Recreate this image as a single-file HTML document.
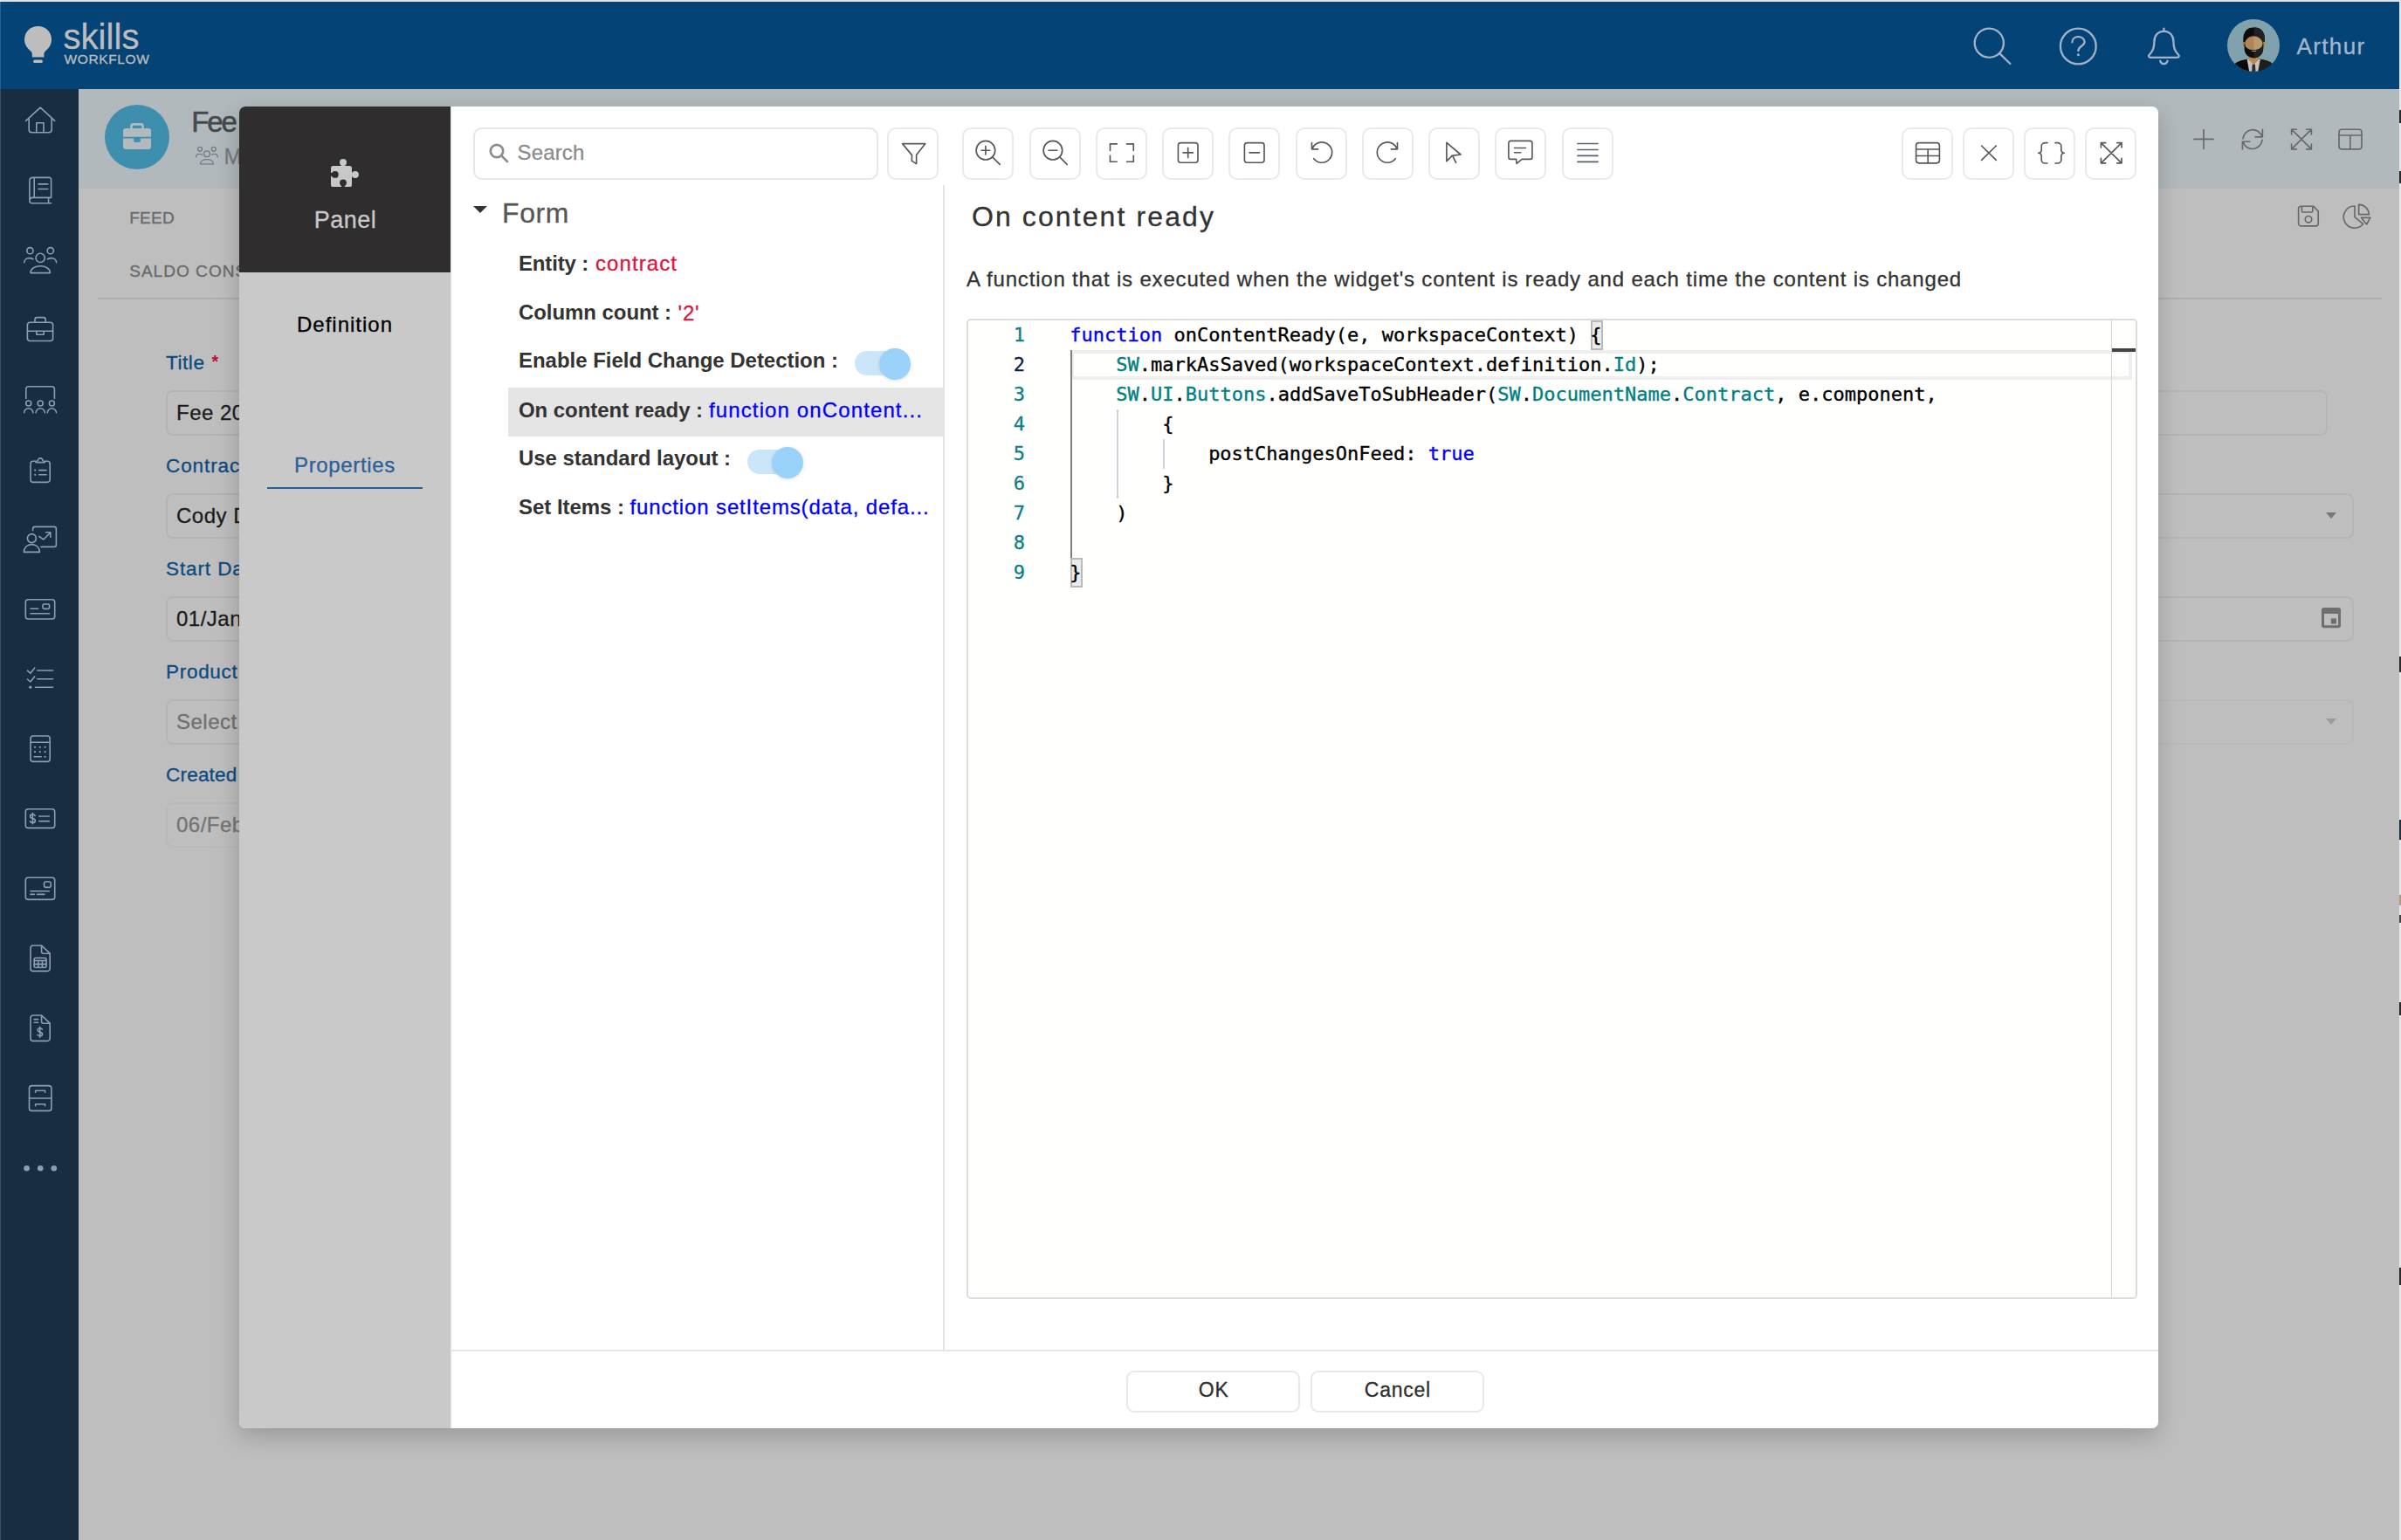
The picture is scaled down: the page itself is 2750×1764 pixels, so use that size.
<!DOCTYPE html>
<html lang="en"><head><meta charset="utf-8"><title>Skills Workflow</title>
<style>
html,body{margin:0;padding:0}
body{width:2750px;height:1764px;position:relative;overflow:hidden;background:#bebebe;font-family:"Liberation Sans",sans-serif}
.t{position:absolute;white-space:nowrap;line-height:1;-webkit-text-stroke:0.3px currentColor}
.a{position:absolute}
svg{position:absolute;overflow:visible}
.ib{position:absolute;box-sizing:border-box;border:2px solid #b3b3b3;border-radius:8px;height:52px}
.cl{-webkit-text-stroke:0.35px currentColor;position:absolute;left:0;height:34px;line-height:34px;font-size:22px;white-space:pre;font-family:"DejaVu Sans Mono","Liberation Mono",monospace;color:#000}
.ln{-webkit-text-stroke:0.3px currentColor;position:absolute;width:60px;text-align:right;height:34px;line-height:34px;font-size:22px;font-family:"DejaVu Sans Mono","Liberation Mono",monospace;color:#237893}
.k{color:#0000ff}.v{color:#008080}
</style></head><body>
<div class="a" style="left:0;top:0;width:2750px;height:2px;background:#e2e2e2"></div>
<div class="a" id="topbar" style="left:0;top:2px;width:2748px;height:100px;background:#044375"></div>
<div class="a" id="sidebar" style="left:0;top:102px;width:90px;height:1662px;background:#182c42"></div>
<div class="a" id="subheader" style="left:90px;top:102px;width:2658px;height:114px;background:#b1b9bd"></div>
<div class="a" style="left:2748px;top:2px;width:2px;height:1762px;background:#e6e6e8"></div>
<div class="a" style="left:2748px;top:126px;width:2px;height:15px;background:#2a2a2a"></div>
<div class="a" style="left:2748px;top:196px;width:2px;height:14px;background:#2a2a2a"></div>
<div class="a" style="left:2748px;top:752px;width:2px;height:18px;background:#2a2a2a"></div>
<div class="a" style="left:2748px;top:939px;width:2px;height:23px;background:#1e3044"></div>
<div class="a" style="left:2748px;top:1025px;width:2px;height:12px;background:#b09a80"></div>
<div class="a" style="left:2748px;top:1048px;width:2px;height:9px;background:#444"></div>
<div class="a" style="left:2748px;top:1148px;width:2px;height:15px;background:#2a2a2a"></div>
<div class="a" style="left:2748px;top:1452px;width:2px;height:20px;background:#2a2a2a"></div>
<div class="a" style="left:0;top:2px;width:1px;height:1762px;background:rgba(255,255,255,.16)"></div>
<svg style="left:26px;top:28px" width="36" height="46" viewBox="0 0 36 46"><path d="M17.5 2 C8.5 2 2 8.8 2 17.2 C2 22.8 4.9 26.9 8.6 29.9 C10.2 31.3 10.8 32.6 10.8 34.6 L10.8 37.6 L24.4 37.6 L24.4 34.6 C24.4 32.6 25 31.3 26.6 29.9 C30.3 26.9 33 22.8 33 17.2 C33 8.8 26.5 2 17.5 2 Z" fill="#bdbdbd"/><rect x="12.2" y="40.6" width="10.6" height="3.4" rx="1.5" fill="#bdbdbd"/></svg>
<span id="t1" class="t" style="left:72.5px;top:21.7px;font-size:40px;color:#bdbdbd;letter-spacing:0.055px;">skills</span>
<span id="t2" class="t" style="left:73.5px;top:60.4px;font-size:15.5px;color:#bdbdbd;letter-spacing:0.625px;">WORKFLOW</span>
<span id="t3" class="t" style="left:2630.5px;top:39.8px;font-size:26px;color:#a3b6cb;letter-spacing:1.365px;">Arthur</span>
<div class="a" style="left:120px;top:120px;width:74px;height:74px;border-radius:50%;background:#3e8fae"></div>
<span id="t4" class="t" style="left:219.2px;top:122.7px;font-size:33px;color:#45494c;letter-spacing:-2.125px;-webkit-text-stroke:0.55px #45494c;">Fee</span>
<span id="t5" class="t" style="left:256.6px;top:167.4px;font-size:25px;color:#777b7e;">M</span>
<span id="t6" class="t" style="left:148.2px;top:239.6px;font-size:19px;color:#666a6c;letter-spacing:0.328px;">FEED</span>
<span id="t7" class="t" style="left:148.2px;top:300.9px;font-size:19px;color:#666a6c;letter-spacing:1.041px;">SALDO CONS</span>
<div class="a" style="left:112px;top:341px;width:2616px;height:2px;background:#b0b0b0"></div>
<span id="t8" class="t" style="left:190.0px;top:405.0px;font-size:22.5px;color:#0d4a80;letter-spacing:0.566px;">Title</span>
<span id="t9" class="t" style="left:190.0px;top:523.0px;font-size:22.5px;color:#0d4a80;letter-spacing:0.9px;">Contract</span>
<span id="t10" class="t" style="left:190.0px;top:641.0px;font-size:22.5px;color:#0d4a80;letter-spacing:0.9px;">Start Date</span>
<span id="t11" class="t" style="left:190.0px;top:759.0px;font-size:22.5px;color:#0d4a80;letter-spacing:0.708px;">Product</span>
<span id="t12" class="t" style="left:190.0px;top:877.0px;font-size:22.5px;color:#0d4a80;letter-spacing:0.208px;">Created</span>
<span id="t13" class="t" style="left:242.4px;top:404.5px;font-size:19.5px;color:#b3122b;font-weight:700;-webkit-text-stroke:0;">*</span>
<div class="ib" style="left:190px;top:447px;width:300px;border-color:#b3b5b5"></div>
<span id="t14" class="t" style="left:202.0px;top:460.5px;font-size:24px;color:#1c1c1c;letter-spacing:0.5px;">Fee 2024</span>
<div class="ib" style="left:190px;top:565px;width:300px;border-color:#b3b5b5"></div>
<span id="t15" class="t" style="left:202.0px;top:578.5px;font-size:24px;color:#1c1c1c;letter-spacing:0.5px;">Cody Davis</span>
<div class="ib" style="left:190px;top:683px;width:300px;border-color:#b3b5b5"></div>
<span id="t16" class="t" style="left:202.0px;top:696.5px;font-size:24px;color:#1c1c1c;letter-spacing:0.5px;">01/Jan/2024</span>
<div class="ib" style="left:190px;top:801px;width:300px;border-color:#b3b5b5"></div>
<span id="t17" class="t" style="left:202.0px;top:814.5px;font-size:24px;color:#707070;letter-spacing:0.5px;">Select...</span>
<div class="ib" style="left:190px;top:919px;width:300px;border-color:#b8b9b9"></div>
<span id="t18" class="t" style="left:202.0px;top:932.5px;font-size:24px;color:#747474;letter-spacing:0.5px;">06/Feb/2024</span>
<div class="ib" style="left:2300px;top:447px;width:366px;border-color:#b4b6b6"></div>
<div class="ib" style="left:2300px;top:565px;width:395.5px;border-color:#b4b6b6"></div>
<div class="ib" style="left:2300px;top:683px;width:395.5px;border-color:#b4b6b6"></div>
<div class="ib" style="left:2300px;top:801px;width:395.5px;border-color:#b8b9b9"></div>
<div class="a" style="left:2663.5px;top:587px;width:0;height:0;border-left:6.5px solid transparent;border-right:6.5px solid transparent;border-top:7px solid #777"></div>
<div class="a" style="left:2663.5px;top:823px;width:0;height:0;border-left:6.5px solid transparent;border-right:6.5px solid transparent;border-top:7px solid #9b9b9b"></div>
<svg style="left:2659px;top:695px" width="22" height="25" viewBox="0 0 22 25"><path d="M2.600 1H19.400A2.600 2.600 0 0 1 22 3.600V21.600A2.600 2.600 0 0 1 19.400 24.200H2.600A2.600 2.600 0 0 1 0 21.600V3.600A2.600 2.600 0 0 1 2.600 1ZM3 8V21.200H19V8Z" fill="#6e6e6e" fill-rule="evenodd"/><rect x="10.800" y="13.400" width="6.200" height="6.200" fill="#6e6e6e"/></svg>
<svg style="left:0;top:0" width="90" height="1764" viewBox="0 0 90 1764" fill="none" stroke="#8b9eb2" stroke-width="1.6" stroke-linecap="round" stroke-linejoin="round"><path d="M29.6 138.4L46.2 123.2L62.7 138.4M33.2 135.4V148.6a3.2 3.2 0 0 0 3.2 3.2H56a3.2 3.2 0 0 0 3.2 -3.2V135.4M41.8 151.8V140.8H50V151.8"/><path d="M58.6 226.4H37.2a3.3 3.3 0 0 0 -3.3 3.3a3 3 0 0 0 3 3H58.6M33.9 229.4V206.6a3.2 3.2 0 0 1 3.2 -3.2H56.4a2.2 2.2 0 0 1 2.2 2.2V226.4M39.2 203.6V226.2M55.6 226.6V232.4M44 210.9H54.8M44 216.5H54.8"/><circle cx="46.2" cy="295.4" r="5.1"/><path d="M35 312.6C35 307.6 40 304.8 46.2 304.8S57.4 307.6 57.4 312.6Z"/><circle cx="34.4" cy="287.2" r="3.6"/><circle cx="57.8" cy="287.2" r="3.6"/><path d="M27.8 300.8C27.8 297.6 30.4 295.6 33.6 295.6C35.4 295.6 36.8 296 38 296.8M64.6 300.8C64.6 297.6 62 295.6 58.8 295.6C57 295.6 55.6 296 54.4 296.8"/><rect x="31.4" y="369.3" width="29.2" height="21.2" rx="3"/><path d="M40 369.3V366a2.4 2.4 0 0 1 2.4 -2.4H49.8a2.4 2.4 0 0 1 2.4 2.4V369.3M31.4 379.3H60.6M41.8 379.3V383.2H50.2V379.3"/><path d="M29.8 456.4V445.8a3 3 0 0 1 3 -3H59.4a3 3 0 0 1 3 3V456.4"/><circle cx="32.7" cy="462" r="3"/><circle cx="46.2" cy="462" r="3"/><circle cx="59.4" cy="462" r="3"/><path d="M27.6 472.8a5.1 5.1 0 0 1 10.2 0M41.1 472.8a5.1 5.1 0 0 1 10.2 0M54.3 472.8a5.1 5.1 0 0 1 10.2 0"/><path d="M41.6 528.2H38a3 3 0 0 0 -3 3V549.4a3 3 0 0 0 3 3H54.2a3 3 0 0 0 3 -3V531.2a3 3 0 0 0 -3 -3H50.8M41 529.6H51.4M43.3 527.8a2.9 2.9 0 1 1 5.8 0M44.8 538.6H53M44.8 543.8H53"/><circle cx="40.2" cy="538.6" r="1.1" fill="#8b9eb2" stroke="none"/><circle cx="40.2" cy="543.8" r="1.1" fill="#8b9eb2" stroke="none"/><path d="M37.6 607.6V605.8a2.4 2.4 0 0 1 2.4 -2.4H62a2.4 2.4 0 0 1 2.4 2.4V624a2.4 2.4 0 0 1 -2.4 2.4H47"/><circle cx="36.4" cy="616.6" r="5"/><path d="M27.4 632.4C27.4 627 31.4 623.6 36.4 623.6S45.4 627 45.4 632.4Z"/><path d="M44.8 614.4L49.8 618L57.8 610M52.6 609.8H57.8V615.2"/><rect x="29.3" y="686.8" width="33.4" height="22.2" rx="3"/><rect x="49" y="692" width="7.6" height="5.4" rx="1.6"/><path d="M35 697.2H43.6M35 702.8H56.6"/><path d="M42.8 768H60.6M42.8 777.8H60.6M40.6 787.2H60.6M31.4 768.2L34.8 771.2L39.6 765.2M31.4 778L34.8 781L39.6 775"/><circle cx="34.8" cy="787.2" r="1.6" fill="#8b9eb2" stroke="none"/><rect x="35" y="843" width="22.2" height="29.4" rx="3"/><path d="M35 850.2H57.2M39.2 866.8H47.2"/><g fill="#8b9eb2" stroke="none"><circle cx="40" cy="855.8" r="1.1"/><circle cx="45.8" cy="855.8" r="1.1"/><circle cx="51.6" cy="855.8" r="1.1"/><circle cx="40" cy="861.2" r="1.1"/><circle cx="45.8" cy="861.2" r="1.1"/><circle cx="51.6" cy="861.2" r="1.1"/><circle cx="51.6" cy="866.8" r="1.1"/></g><rect x="29.3" y="926.8" width="33.4" height="21.6" rx="3"/><path d="M44.8 935H56.4M44.8 940.6H56.4"/><path d="M40.2 934.4C39.6 933.2 38.6 932.8 37.4 932.8C35.8 932.8 34.6 933.8 34.6 935.2C34.6 938.4 40.4 936.8 40.4 940C40.4 941.4 39.2 942.4 37.4 942.4C36 942.4 35 941.8 34.4 940.6M37.4 931.4V943.8"/><rect x="29.3" y="1005.2" width="33.4" height="25.2" rx="3"/><rect x="50.6" y="1010" width="7.6" height="6.4" rx="1.8"/><path d="M35 1020.8H56.4M35 1024.4H39.4M42.6 1024.4H50.8"/><path d="M47.6 1083H38a3 3 0 0 0 -3 3V1109.4a3 3 0 0 0 3 3H54.2a3 3 0 0 0 3 -3V1092.2ZM47.6 1083V1090a2.2 2.2 0 0 0 2.2 2.2H57.2"/><rect x="39.2" y="1097.2" width="13.8" height="11" rx="1.4"/><path d="M39.2 1100.4H53M39.2 1104.4H53M43.8 1100.4V1108.2M48.4 1100.4V1108.2"/><path d="M47.6 1163H38a3 3 0 0 0 -3 3V1189.4a3 3 0 0 0 3 3H54.2a3 3 0 0 0 3 -3V1172.2ZM47.6 1163V1170a2.2 2.2 0 0 0 2.2 2.2H57.2M39.2 1167.6H43.6M39.2 1171.2H43.6"/><path d="M48.4 1179.2C47.8 1178.2 47 1177.8 45.8 1177.8C44.2 1177.8 43.2 1178.8 43.2 1180C43.2 1183 48.6 1181.6 48.6 1184.6C48.6 1186 47.4 1186.8 45.8 1186.8C44.4 1186.8 43.6 1186.2 43 1185.2M45.8 1176.4V1188.2"/><rect x="33.5" y="1243.6" width="25.4" height="28.8" rx="3"/><path d="M33.5 1258H58.9M40.6 1251.2V1249.2H51.6V1251.2M40.6 1266.8V1264.8H51.6V1266.8"/><g fill="#8b9eb2" stroke="none"><circle cx="30.6" cy="1338.2" r="3.3"/><circle cx="46.2" cy="1338.2" r="3.3"/><circle cx="61.8" cy="1338.2" r="3.3"/></g></svg>
<svg style="left:0;top:0" width="2750" height="102" viewBox="0 0 2750 102" fill="none" stroke="#a2b3c8" stroke-width="2.3" stroke-linecap="round" stroke-linejoin="round"><circle cx="2278.3" cy="49.2" r="16.6"/><path d="M2290.2 61.2L2302.4 73"/><circle cx="2380.3" cy="53" r="20.4"/><path d="M2373.4 48.4C2373.4 44.6 2376.4 42.2 2380.4 42.2C2384.4 42.2 2387.6 44.6 2387.6 48C2387.6 53 2380.4 52.6 2380.4 58.2"/><circle cx="2380.4" cy="62.8" r="1.5" fill="#a2b3c8" stroke="none"/><path d="M2478.4 32.6V35.6M2478.4 35.8C2471.2 35.8 2467.4 41.2 2467.4 47.6C2467.4 55.6 2465.6 59.4 2461.8 62.6C2460.4 63.8 2461 65.8 2463 65.8H2493.8C2495.8 65.8 2496.4 63.8 2495 62.6C2491.2 59.4 2489.4 55.6 2489.4 47.6C2489.4 41.2 2485.6 35.8 2478.4 35.8ZM2474.2 69.8C2475 72 2476.4 73.2 2478.4 73.2S2481.8 72 2482.6 69.8"/></svg>
<svg style="left:2551.2px;top:21.8px" width="60" height="60" viewBox="0 0 60 60"><defs><clipPath id="avc"><circle cx="30" cy="30" r="30"/></clipPath></defs><g clip-path="url(#avc)"><rect width="60" height="60" fill="#7fa2ad"/>
<path d="M5 60C6 52 10 48.500 18 46.800L24 45.600H36.500L42.500 46.800C50.500 48.500 54.500 52 55.500 60Z" fill="#0a0a0a"/>
<path d="M30.500 45.600H36.500L42.500 46.800C50.500 48.500 54.500 52 55.500 60H30.500Z" fill="#1e1e1e"/>
<path d="M22.600 45.800H37.900L35.200 60H25.200Z" fill="#c3c5c5"/>
<path d="M24 40H36.400V45.800L30.300 52.400L24 45.800Z" fill="#b88b55"/>
<path d="M28.700 51.800H31.900L32.500 60H28.100Z" fill="#2d2d2d"/>
<path d="M18.600 30C16.800 15 21.500 9.500 30.600 9.500C39.700 9.500 44.400 15 42.600 30Z" fill="#0c0c0c"/>
<path d="M30.600 9.500C39.700 9.500 44.400 15 42.600 30H30.600Z" fill="#222"/>
<ellipse cx="19.100" cy="28.600" rx="1.500" ry="2.800" fill="#a87d50"/><ellipse cx="41.900" cy="28.600" rx="1.500" ry="2.800" fill="#b38c5c"/>
<ellipse cx="30.400" cy="27.800" rx="9.900" ry="8.300" fill="#ba9a6a"/>
<path d="M30.400 19.500A9.900 8.300 0 0 0 30.400 36.100Z" fill="#b08456"/>
<path d="M19.500 27C19.500 29.500 19.400 33 19.800 36C20.800 41 25 44.400 30.400 44.400C35.800 44.400 40 41 41 36C41.400 33 41.300 29.500 41.300 27C40.500 32.200 37 35.200 30.400 35.200C23.800 35.200 20.300 32.200 19.500 27Z" fill="#0e0e0e"/>
<path d="M30.400 35.200C37 35.200 40.500 32.200 41.300 27C41.300 29.500 41.400 33 41 36C40 41 35.800 44.400 30.400 44.400Z" fill="#202020"/>
<rect x="27.800" y="36.200" width="5.400" height="0.900" rx="0.400" fill="#c9c9c9"/>
</g></svg>
<svg style="left:0;top:0" width="2750" height="300" viewBox="0 0 2750 300" fill="none" stroke="#686868" stroke-width="1.65" stroke-linecap="round" stroke-linejoin="round"><path d="M2513 159.4H2535M2524 148.6V170.4"/><path d="M2591.4 148.2V156.8H2583M2568.4 171V162.2H2576.800M2569 158.800A11.200 11.200 0 0 1 2590.800 156.400M2591 160.400A11.200 11.200 0 0 1 2569.200 162.800"/><path d="M2624.600 148.200L2647.400 170.800M2647.400 148.200L2624.600 170.800M2624.600 154V148.200H2630.400M2641.600 148.200H2647.400V154M2624.600 165V170.800H2630.400M2641.600 170.800H2647.400V165"/><rect x="2679" y="148.200" width="26" height="22.600" rx="3"/><path d="M2679 155H2705M2691.800 155V170.800"/><path d="M2635.400 236.200H2649.600L2655.200 241.800V256a2.800 2.800 0 0 1 -2.800 2.800H2635.400a2.800 2.800 0 0 1 -2.800 -2.800V239a2.800 2.800 0 0 1 2.800 -2.800ZM2636.400 236.400V241.600a1.400 1.400 0 0 0 1.400 1.400H2647.400a1.400 1.400 0 0 0 1.400 -1.400V236.400"/><circle cx="2644" cy="251.200" r="3.700"/><path d="M2697 236A12.600 12.600 0 1 0 2706.600 256.600L2697 248.600Z"/><path d="M2701.600 234.400V245.600H2713.400A11.800 11.800 0 0 0 2701.600 234.400ZM2704.600 249.400H2714.800L2710.600 257Z"/></svg>
<svg style="left:120px;top:120px" width="74" height="74" viewBox="120 120 74 74"><rect x="141" y="147" width="32" height="24" rx="3.200" fill="#b2babe"/><path d="M150.500 147V144.400a2 2 0 0 1 2 -2H161.500a2 2 0 0 1 2 2V147" fill="none" stroke="#b2babe" stroke-width="2.600"/><path d="M141 156.800H173V158.400H160.900V161a2 2 0 0 1 -2 2H155.100a2 2 0 0 1 -2 -2V158.400H141Z" fill="#3e8fae"/></svg>
<svg style="left:223.6px;top:166.6px" width="26" height="22" viewBox="27 282.4 38.6 31.2" fill="none" stroke="#6f7b85" stroke-width="2" stroke-linecap="round" stroke-linejoin="round"><circle cx="46.2" cy="295.4" r="5.1"/><path d="M35 312.6C35 307.6 40 304.8 46.2 304.8S57.4 307.6 57.4 312.6Z"/><circle cx="34.4" cy="287.2" r="3.6"/><circle cx="57.8" cy="287.2" r="3.6"/><path d="M27.8 300.8C27.8 297.6 30.4 295.6 33.6 295.6C35.4 295.6 36.8 296 38 296.8M64.6 300.8C64.6 297.6 62 295.6 58.8 295.6C57 295.6 55.6 296 54.4 296.8"/></svg>
<div class="a" id="modal" style="left:274px;top:122px;width:2198px;height:1514px;border-radius:7px;background:#fff;box-shadow:-1px 9px 28px rgba(0,0,0,.2)">
<div class="a" style="left:0;top:0;width:242px;height:1514px;background:#c9c9c9;border-radius:7px 0 0 7px"></div>
<div class="a" style="left:0;top:0;width:242px;height:190px;border-radius:7px 0 0 0;background:#2f2d2e"></div>
<div class="a" style="left:242px;top:0;width:2px;height:1514px;background:linear-gradient(90deg,#e4e4e4,#fafafa)"></div>
</div>
<span id="t19" class="t" style="left:395.5px;transform:translateX(-50%);top:238.9px;font-size:27px;color:#c9c9c9;letter-spacing:0.487px;">Panel</span>
<span id="t20" class="t" style="left:395.0px;transform:translateX(-50%);top:360.3px;font-size:24px;color:#000;letter-spacing:0.994px;">Definition</span>
<span id="t21" class="t" style="left:395.0px;transform:translateX(-50%);top:520.7px;font-size:24px;color:#2c6096;letter-spacing:0.661px;">Properties</span>
<div class="a" style="left:306px;top:558px;width:178px;height:2px;background:#265d96"></div>
<div class="a" style="left:542px;top:146px;width:464px;height:59.6px;box-sizing:border-box;border:2px solid #e4e7e7;border-radius:10px"></div>
<span id="t22" class="t" style="left:592.5px;top:163.1px;font-size:24px;color:#8c8c8c;letter-spacing:0.159px;">Search</span>
<div class="a" style="left:1016px;top:146px;width:59px;height:59.6px;box-sizing:border-box;border:2px solid #e8ebeb;border-radius:10px"></div>
<div class="a" style="left:1102.4px;top:146px;width:59px;height:59.6px;box-sizing:border-box;border:2px solid #e8ebeb;border-radius:10px"></div>
<div class="a" style="left:1178.7px;top:146px;width:59px;height:59.6px;box-sizing:border-box;border:2px solid #e8ebeb;border-radius:10px"></div>
<div class="a" style="left:1254.9px;top:146px;width:59px;height:59.6px;box-sizing:border-box;border:2px solid #e8ebeb;border-radius:10px"></div>
<div class="a" style="left:1331.2px;top:146px;width:59px;height:59.6px;box-sizing:border-box;border:2px solid #e8ebeb;border-radius:10px"></div>
<div class="a" style="left:1407.4px;top:146px;width:59px;height:59.6px;box-sizing:border-box;border:2px solid #e8ebeb;border-radius:10px"></div>
<div class="a" style="left:1483.7px;top:146px;width:59px;height:59.6px;box-sizing:border-box;border:2px solid #e8ebeb;border-radius:10px"></div>
<div class="a" style="left:1559.9px;top:146px;width:59px;height:59.6px;box-sizing:border-box;border:2px solid #e8ebeb;border-radius:10px"></div>
<div class="a" style="left:1636.2px;top:146px;width:59px;height:59.6px;box-sizing:border-box;border:2px solid #e8ebeb;border-radius:10px"></div>
<div class="a" style="left:1712.4px;top:146px;width:59px;height:59.6px;box-sizing:border-box;border:2px solid #e8ebeb;border-radius:10px"></div>
<div class="a" style="left:1788.7px;top:146px;width:59px;height:59.6px;box-sizing:border-box;border:2px solid #e8ebeb;border-radius:10px"></div>
<div class="a" style="left:2178.0px;top:146px;width:59px;height:59.6px;box-sizing:border-box;border:2px solid #e8ebeb;border-radius:10px"></div>
<div class="a" style="left:2248.0px;top:146px;width:59px;height:59.6px;box-sizing:border-box;border:2px solid #e8ebeb;border-radius:10px"></div>
<div class="a" style="left:2318.0px;top:146px;width:59px;height:59.6px;box-sizing:border-box;border:2px solid #e8ebeb;border-radius:10px"></div>
<div class="a" style="left:2388.0px;top:146px;width:59px;height:59.6px;box-sizing:border-box;border:2px solid #e8ebeb;border-radius:10px"></div>
<div class="a" style="left:1080px;top:212px;width:2px;height:1335px;background:#e3e3e3"></div>
<div class="a" style="left:516px;top:1546px;width:1956px;height:2px;background:#e6e6e6"></div>
<div class="a" style="left:1290.0px;top:1569.5px;width:199px;height:48px;box-sizing:border-box;border:2px solid #e7e9e9;border-radius:9px"></div>
<span id="t23" class="t" style="left:1390.3px;transform:translateX(-50%);top:1581.3px;font-size:23px;color:#2e2e2e;letter-spacing:0.883px;">OK</span>
<div class="a" style="left:1500.5px;top:1569.5px;width:199px;height:48px;box-sizing:border-box;border:2px solid #e7e9e9;border-radius:9px"></div>
<span id="t24" class="t" style="left:1600.8px;transform:translateX(-50%);top:1581.3px;font-size:23px;color:#2e2e2e;letter-spacing:0.732px;">Cancel</span>
<div class="a" style="left:542px;top:236px;width:0;height:0;border-left:8px solid transparent;border-right:8px solid transparent;border-top:8.5px solid #333"></div>
<span id="t25" class="t" style="left:575.0px;top:228.4px;font-size:32px;color:#555;letter-spacing:0.586px;">Form</span>
<div class="a" style="left:582px;top:444px;width:498px;height:55.5px;background:#e5e5e5"></div>
<span id="t26" class="t" style="left:594.0px;top:289.7px;font-size:24px;color:#333;font-weight:700;-webkit-text-stroke:0;letter-spacing:-0.166px;">Entity :</span>
<span id="t27" class="t" style="left:682.0px;top:290.2px;font-size:24px;color:#dc143c;letter-spacing:1.078px;">contract</span>
<span id="t28" class="t" style="left:594.0px;top:346.0px;font-size:24px;color:#333;font-weight:700;-webkit-text-stroke:0;letter-spacing:-0.069px;">Column count :</span>
<span id="t29" class="t" style="left:776.5px;top:346.5px;font-size:24px;color:#dc143c;letter-spacing:0.828px;">'2'</span>
<span id="t30" class="t" style="left:594.0px;top:401.0px;font-size:24px;color:#333;font-weight:700;-webkit-text-stroke:0;letter-spacing:-0.023px;">Enable Field Change Detection :</span>
<span id="t31" class="t" style="left:594.0px;top:457.5px;font-size:24px;color:#333;font-weight:700;-webkit-text-stroke:0;letter-spacing:-0.057px;">On content ready :</span>
<span id="t32" class="t" style="left:812.0px;top:458.0px;font-size:24px;color:#0000ff;letter-spacing:1.120px;">function onContent...</span>
<span id="t33" class="t" style="left:594.0px;top:513.0px;font-size:24px;color:#333;font-weight:700;-webkit-text-stroke:0;letter-spacing:-0.051px;">Use standard layout :</span>
<span id="t34" class="t" style="left:594.0px;top:568.9px;font-size:24px;color:#333;font-weight:700;-webkit-text-stroke:0;letter-spacing:-0.034px;">Set Items :</span>
<span id="t35" class="t" style="left:721.5px;top:569.4px;font-size:24px;color:#0000ff;letter-spacing:0.865px;">function setItems(data, defa...</span>
<div class="a" style="left:979.0px;top:402px;width:60px;height:28px;border-radius:14px;background:#cce6f9"></div>
<div class="a" style="left:1007.0px;top:399px;width:36px;height:36px;border-radius:50%;background:#9ad2f9;box-shadow:0 1px 4px rgba(0,0,0,.12)"></div>
<div class="a" style="left:855.5px;top:515px;width:60px;height:28px;border-radius:14px;background:#cce6f9"></div>
<div class="a" style="left:883.5px;top:512px;width:36px;height:36px;border-radius:50%;background:#9ad2f9;box-shadow:0 1px 4px rgba(0,0,0,.12)"></div>
<span id="t36" class="t" style="left:1113.0px;top:232.4px;font-size:32px;color:#333;letter-spacing:2.095px;">On content ready</span>
<span id="t37" class="t" style="left:1107.0px;top:307.7px;font-size:24px;color:#333;letter-spacing:0.822px;">A function that is executed when the widget's content is ready and each time the content is changed</span>
<div class="a" id="ed" style="left:1107px;top:365px;width:1341px;height:1123px;box-sizing:border-box;border:2px solid #dcdcdc;border-radius:5px;background:#fffffe;overflow:hidden">
<div class="a" style="left:119px;top:34px;width:1214px;height:34px;box-sizing:border-box;border:4px solid #eeeeee;border-left-width:2px"></div>
<div class="a" style="left:713px;top:0;width:14px;height:34px;box-sizing:border-box;border:2px solid #b9b9b9;background:#ebebeb"></div>
<div class="a" style="left:117px;top:272px;width:14px;height:34px;box-sizing:border-box;border:2px solid #b9b9b9;background:#ebebeb"></div>
<div class="a" style="left:117px;top:34px;width:2px;height:238px;background:#808080"></div>
<div class="a" style="left:170px;top:102px;width:2px;height:102px;background:#d0d3dd"></div>
<div class="a" style="left:223px;top:136px;width:2px;height:34px;background:#d0d3dd"></div>
<div class="ln" style="left:5px;top:0px;color:#0b7f88">1</div>
<div class="cl" style="left:116.2px;top:0px;letter-spacing:-0.000px"><span class="k">function</span> onContentReady(e, workspaceContext) {</div>
<div class="ln" style="left:5px;top:34px;color:#0b1f52">2</div>
<div class="cl" style="left:116.2px;top:34px;letter-spacing:-0.000px">    <span class="v">SW</span>.markAsSaved(workspaceContext.definition.<span class="v">Id</span>);</div>
<div class="ln" style="left:5px;top:68px;color:#0b7f88">3</div>
<div class="cl" style="left:116.2px;top:68px;letter-spacing:-0.000px">    <span class="v">SW</span>.<span class="v">UI</span>.<span class="v">Buttons</span>.addSaveToSubHeader(<span class="v">SW</span>.<span class="v">DocumentName</span>.<span class="v">Contract</span>, e.component,</div>
<div class="ln" style="left:5px;top:102px;color:#0b7f88">4</div>
<div class="cl" style="left:116.2px;top:102px;letter-spacing:-0.000px">        {</div>
<div class="ln" style="left:5px;top:136px;color:#0b7f88">5</div>
<div class="cl" style="left:116.2px;top:136px;letter-spacing:-0.000px">            postChangesOnFeed: <span class="k">true</span></div>
<div class="ln" style="left:5px;top:170px;color:#0b7f88">6</div>
<div class="cl" style="left:116.2px;top:170px;letter-spacing:-0.000px">        }</div>
<div class="ln" style="left:5px;top:204px;color:#0b7f88">7</div>
<div class="cl" style="left:116.2px;top:204px;letter-spacing:-0.000px">    )</div>
<div class="ln" style="left:5px;top:238px;color:#0b7f88">8</div>
<div class="ln" style="left:5px;top:272px;color:#0b7f88">9</div>
<div class="cl" style="left:116.2px;top:272px;letter-spacing:-0.000px">}</div>
<div class="a" style="left:1309px;top:0;width:1px;height:1119px;background:#d6d6d6"></div>
<div class="a" style="left:1310px;top:32px;width:27px;height:4px;background:#424242"></div>
</div>
<svg style="left:1102.4px;top:145.8px" width="59" height="59" viewBox="0 0 59 59" fill="none" stroke="#585858" stroke-width="1.65" stroke-linecap="round" stroke-linejoin="round" ><circle cx="26.9" cy="26.2" r="10.8"/><path d="M34.7 33.9L43.2 42.3M22 26.2h9.8M26.9 21.3v9.8"/></svg>
<svg style="left:1178.7px;top:145.8px" width="59" height="59" viewBox="0 0 59 59" fill="none" stroke="#585858" stroke-width="1.65" stroke-linecap="round" stroke-linejoin="round" ><circle cx="26.9" cy="26.2" r="10.8"/><path d="M34.7 33.9L43.2 42.3M22 26.2h9.8"/></svg>
<svg style="left:1254.9px;top:145.8px" width="59" height="59" viewBox="0 0 59 59" fill="none" stroke="#585858" stroke-width="1.65" stroke-linecap="round" stroke-linejoin="round" ><path d="M24.2 18.9H16.5V26.4M35.6 18.9H43.3V26.4M16.5 32.2V39.2H24.2M43.3 32.2V39.2H35.6"/></svg>
<svg style="left:1331.2px;top:145.8px" width="59" height="59" viewBox="0 0 59 59" fill="none" stroke="#585858" stroke-width="1.65" stroke-linecap="round" stroke-linejoin="round" ><rect x="18.4" y="17.6" width="22.6" height="22.6" rx="3"/><path d="M24 28.9h11.4M29.7 23.2v11.4"/></svg>
<svg style="left:1407.4px;top:145.8px" width="59" height="59" viewBox="0 0 59 59" fill="none" stroke="#585858" stroke-width="1.65" stroke-linecap="round" stroke-linejoin="round" ><rect x="18.4" y="17.6" width="22.6" height="22.6" rx="3"/><path d="M24 28.9h11.4"/></svg>
<svg style="left:1483.7px;top:145.8px" width="59" height="59" viewBox="0 0 59 59" fill="none" stroke="#585858" stroke-width="1.65" stroke-linecap="round" stroke-linejoin="round" ><path d="M18.5 17.6V24.8H25.7M18.9 24.8A11.7 11.7 0 1 1 20.7 35.7"/></svg>
<svg style="left:1559.9px;top:145.8px" width="59" height="59" viewBox="0 0 59 59" fill="none" stroke="#585858" stroke-width="1.65" stroke-linecap="round" stroke-linejoin="round" ><path d="M40.5 17.6V24.8H33.3M40.1 24.8A11.7 11.7 0 1 0 38.3 35.7"/></svg>
<svg style="left:1636.2px;top:145.8px" width="59" height="59" viewBox="0 0 59 59" fill="none" stroke="#585858" stroke-width="1.65" stroke-linecap="round" stroke-linejoin="round" ><path d="M20.9 17.3V38.7L27.2 32.4L37 31Z"/><path d="M27.8 32.6L31.6 40.3"/></svg>
<svg style="left:1712.4px;top:145.8px" width="59" height="59" viewBox="0 0 59 59" fill="none" stroke="#585858" stroke-width="1.65" stroke-linecap="round" stroke-linejoin="round" ><path d="M18.3 15.4H40.5a2.4 2.4 0 0 1 2.4 2.4V33.9a2.4 2.4 0 0 1 -2.4 2.4H31.2L25 41.3L24.6 36.3H18.3a2.4 2.4 0 0 1 -2.4 -2.4V17.8a2.4 2.4 0 0 1 2.4 -2.4Z"/><path d="M22.6 23.5H35.4M22.6 28.7H29.8"/></svg>
<svg style="left:1788.7px;top:145.8px" width="59" height="59" viewBox="0 0 59 59" fill="none" stroke="#585858" stroke-width="1.65" stroke-linecap="round" stroke-linejoin="round" ><path d="M17.9 18.5H41.1M17.9 25.5H41.1M17.9 32.4H41.1M17.9 39.4H41.1" stroke="#59636e"/></svg>
<svg style="left:2178.0px;top:145.8px" width="59" height="59" viewBox="0 0 59 59" fill="none" stroke="#585858" stroke-width="1.65" stroke-linecap="round" stroke-linejoin="round" ><rect x="16.6" y="17.6" width="26.8" height="23.2" rx="3.2"/><path d="M16.6 25H43.4M16.6 32.5H43.4M30.2 25V40.8"/></svg>
<svg style="left:2248.0px;top:145.8px" width="59" height="59" viewBox="0 0 59 59" fill="none" stroke="#585858" stroke-width="1.65" stroke-linecap="round" stroke-linejoin="round" ><path d="M21.6 21L38.3 37.3M38.3 21L21.6 37.3"/></svg>
<svg style="left:2318.0px;top:145.8px" width="59" height="59" viewBox="0 0 59 59" fill="none" stroke="#585858" stroke-width="1.65" stroke-linecap="round" stroke-linejoin="round" ><path d="M27 17.6H24.2a4 4 0 0 0 -4 4V25.4q0 3.6 -3.6 3.8q3.6 0.2 3.6 3.8V37a4 4 0 0 0 4 4H27M36 17.6H38.8a4 4 0 0 1 4 4V25.4q0 3.6 3.6 3.8q-3.6 0.2 -3.6 3.8V37a4 4 0 0 1 -4 4H36"/></svg>
<svg style="left:2388.0px;top:145.8px" width="59" height="59" viewBox="0 0 59 59" fill="none" stroke="#585858" stroke-width="1.65" stroke-linecap="round" stroke-linejoin="round" ><path d="M18.4 17.6L42 40.8M42 17.6L18.4 40.8M18.4 23V17.6H23.8M36.6 17.6H42V23M18.4 35.4V40.8H23.8M36.6 40.8H42V35.4"/></svg>
<svg style="left:560.0px;top:164.0px" width="24" height="24" viewBox="0 0 24 24" fill="none" stroke="#8c8c8c" stroke-width="2.7" stroke-linecap="round" stroke-linejoin="round" ><circle cx="9" cy="9" r="7.2"/><path d="M14.4 14.4L21 21"/></svg>
<svg style="left:1016.5px;top:146.5px" width="59" height="59" viewBox="0 0 59 59" fill="none" stroke="#585858" stroke-width="1.65" stroke-linecap="round" stroke-linejoin="round" ><path d="M16.6 17.6H42.8L32.6 30.6V40.6L27.4 37.4V30.6Z"/></svg>
<svg style="left:370px;top:175px" width="50" height="45" viewBox="370 175 50 45"><g fill="#c8c8c8"><rect x="379" y="190" width="24" height="24" rx="2.6"/><circle cx="393" cy="186" r="4"/><rect x="390.900" y="186" width="4.200" height="5"/><circle cx="406.900" cy="199.900" r="4"/><rect x="402" y="197.800" width="4.500" height="4.200"/></g><g fill="#2f2d2e"><circle cx="383.800" cy="199.900" r="3.900"/><rect x="378.500" y="198" width="2.500" height="3.800"/><circle cx="393" cy="209.300" r="3.900"/><rect x="391.100" y="211.500" width="3.800" height="3"/></g></svg>
</body></html>
